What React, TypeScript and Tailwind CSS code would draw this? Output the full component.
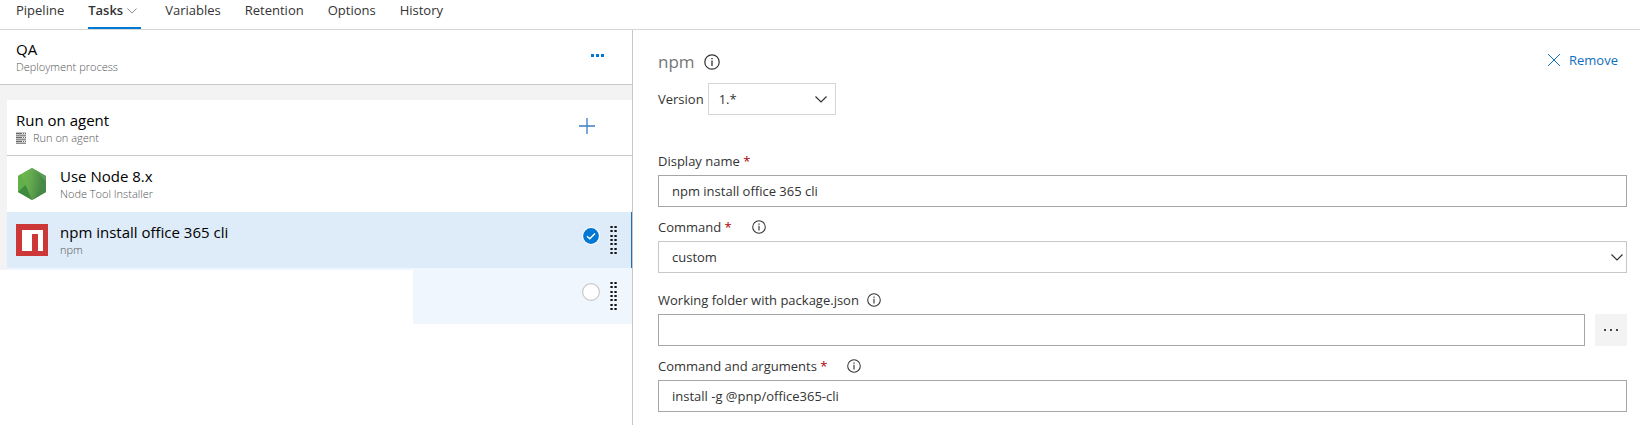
import { useState, type ReactNode } from "react";

const tabs = ["Pipeline", "Tasks", "Variables", "Retention", "Options", "History"];

function Chevron({ className }: { className?: string }) {
  return (
    <svg className={className} viewBox="0 0 12 7" fill="none" stroke="currentColor" strokeWidth="1.2" aria-hidden="true">
      <path d="M0.5 0.5 6 6 11.5 0.5" />
    </svg>
  );
}

function InfoIcon({ className }: { className?: string }) {
  return (
    <svg className={className} viewBox="0 0 16 16" fill="none" stroke="currentColor" aria-hidden="true">
      <circle cx="8" cy="8" r="7.2" strokeWidth="1.2" />
      <path d="M8 6.6V12" strokeWidth="1.3" />
      <path d="M8 3.9V5.3" strokeWidth="1.4" />
    </svg>
  );
}

function NodeIcon() {
  return (
    <svg className="h-8 w-8 shrink-0" viewBox="0 0 32 32" aria-hidden="true">
      <defs>
        <linearGradient id="node-face" x1="0" y1="0.3" x2="1" y2="0.5">
          <stop offset="0" stopColor="#6cbb4b" />
          <stop offset="0.4" stopColor="#64a94f" />
          <stop offset="1" stopColor="#3f8043" />
        </linearGradient>
      </defs>
      <path d="M16 0 30 8V24L16 32 2 24V8Z" fill="#5da352" />
      <path d="M16 0 22 3.500 29 13 19 30.500 16 32 5 6.300Z" fill="url(#node-face)" />
      <path d="M5 6.300 10 18 2 24V8Z" fill="#62b04a" />
      <path d="M2 24 9.500 17 16 32Z" fill="#3f8a3f" />
      <path d="M22 3.500 30 8V13Z" fill="#5f9a62" />
      <path d="M30 12V24L18 31Z" fill="#478748" />
    </svg>
  );
}

function NpmIcon() {
  return (
    <svg className="h-8 w-8 shrink-0" viewBox="0 0 32 32" aria-hidden="true">
      <path d="M0 0H32V32H0Z" fill="#cb3837" />
      <path d="M6 6H27V27H22V10H16V27H6Z" fill="#fff" />
    </svg>
  );
}

function ServerIcon() {
  return (
    <svg className="h-3 w-[10px] shrink-0" viewBox="0 0 10 12" aria-hidden="true">
      <path d="M0 0H10V12H0Z" fill="#c4c4c4" />
      <path d="M0 1.500H10M0 5.500H10M0 9.500H10" stroke="#6b6b6b" />
      <path d="M0 3.500H10M0 7.500H10M0 11.500H10" stroke="#8f8f8f" />
      <path d="M6 1.500H7M8 1.500H9M6 5.500H7M8 5.500H9M6 9.500H7M8 9.500H9" stroke="#eee" />
    </svg>
  );
}

function Grip() {
  return (
    <svg className="h-7 w-[7px]" viewBox="0 0 7 28" aria-hidden="true">
      {[0, 4, 9, 13, 17, 22, 26].map((y) => (
        <path key={y} d={`M0.400 ${y}h2.300v2h-2.300zM4.400 ${y}h2.300v2h-2.300z`} fill="#111" />
      ))}
    </svg>
  );
}

function TitleBlock({ title, children }: { title: string; children: ReactNode }) {
  return (
    <div className="min-w-0 flex-1">
      <div className="text-[15px] leading-5 text-black">{title}</div>
      <div className="flex items-center gap-[7px] text-[11px] leading-4 font-light text-[#555]">{children}</div>
    </div>
  );
}

function Field({ id, label, required, info, children }: { id: string; label: string; required?: boolean; info?: boolean; children: ReactNode }) {
  return (
    <div className="flex flex-col gap-1">
      <div className="flex h-5 items-center">
        <label htmlFor={id}>
          {label}
          {required && <span className="text-[#a80000]"> *</span>}
        </label>
        {info && <InfoIcon className={required ? "ml-5 h-[14px] w-[14px]" : "ml-2 h-[14px] w-[14px]"} />}
      </div>
      {children}
    </div>
  );
}

const inputClass = "h-8 w-full min-w-0 border border-[#a6a6a6] bg-white px-[13px] outline-none";

export default function App() {
  const [name, setName] = useState("npm install office 365 cli");
  const [folder, setFolder] = useState("");
  const [args, setArgs] = useState("install -g @pnp/office365-cli");

  return (
    <div className="flex min-h-screen flex-col bg-white font-['Open_Sans','Noto_Sans',sans-serif] text-[13px] leading-5 text-[#333]">
      <nav className="flex h-[30px] gap-6 border-b border-[#d6d6d6] px-4">
        {tabs.map((tab) =>
          tab === "Tasks" ? (
            <a key={tab} href="#tasks" className="flex items-start gap-1 border-b-2 border-[#0078d4] pr-1 font-semibold">
              {tab}
              <Chevron className="mt-2 h-[6px] w-[10px] text-[#888]" />
            </a>
          ) : (
            <a key={tab} href={`#${tab.toLowerCase()}`}>{tab}</a>
          ),
        )}
      </nav>

      <div className="flex flex-1">
        <aside className="flex w-[633px] shrink-0 flex-col border-r border-[#c8c8c8]">
          <div className="flex h-[55px] items-center border-b border-[#c8c8c8] pr-7 pl-4">
            <TitleBlock title="QA">Deployment process</TitleBlock>
            <button type="button" aria-label="More actions" className="pb-1 text-[#0078d4]">
              <svg className="h-[3px] w-[13px]" viewBox="0 0 13 3" fill="currentColor" aria-hidden="true">
                <path d="M0 0h3v3H0zM5 0h3v3H5zM10 0h3v3h-3z" />
              </svg>
            </button>
          </div>
          <div className="bg-[#f3f3f3] pt-[15px] pl-[7px]">
            <div className="flex h-14 items-center border-b border-[#c8c8c8] bg-white pr-[37px] pl-[9px]">
              <TitleBlock title="Run on agent">
                <ServerIcon />
                Run on agent
              </TitleBlock>
              <button type="button" aria-label="Add a task" className="pb-1 text-[#3b7cc4]">
                <svg className="h-4 w-4" viewBox="0 0 16 16" fill="none" stroke="currentColor" strokeWidth="1.3" aria-hidden="true">
                  <path d="M0 8H16M8 0V16" />
                </svg>
              </button>
            </div>
            <div className="flex h-14 items-center gap-3 bg-white pl-[9px]">
              <NodeIcon />
              <TitleBlock title="Use Node 8.x">Node Tool Installer</TitleBlock>
            </div>
            <div className="flex h-14 items-center gap-3 border-r border-[#1f6fb5] bg-[#deebf8] pr-[14px] pl-[9px]">
              <NpmIcon />
              <TitleBlock title="npm install office 365 cli">npm</TitleBlock>
              <div className="flex items-center gap-[10px]">
                <svg className="-mt-2 h-[18px] w-[18px]" viewBox="0 0 18 18" aria-hidden="true">
                  <circle cx="9" cy="9" r="9" fill="#fff" />
                  <circle cx="9" cy="9" r="7.900" fill="#0078d4" />
                  <path d="M5 9.200 7.800 11.700 13 6.500" fill="none" stroke="#fff" strokeWidth="1.500" />
                </svg>
                <Grip />
              </div>
            </div>
          </div>
          <div className="flex items-start">
            <div className="h-[2px] flex-1 border-l-[7px] border-[#f3f3f3] bg-[#eff6fd]" />
            <div className="flex h-14 w-[219px] items-center justify-end gap-[10px] bg-[#eff6fd] pr-[15px]">
              <svg className="-mt-2 h-[18px] w-[18px]" viewBox="0 0 18 18" aria-hidden="true">
                <circle cx="9" cy="9" r="8.400" fill="#fff" stroke="#c8c8c8" strokeWidth="1.200" />
              </svg>
              <Grip />
            </div>
          </div>
        </aside>

        <main className="min-w-0 flex-1 pt-5 pr-[13px] pl-[25px]">
          <div className="flex items-start justify-between">
            <h1 className="flex items-center gap-[9px] text-[17px] leading-6 text-[#767676]">
              npm
              <InfoIcon className="h-4 w-4 text-[#333]" />
            </h1>
            <button type="button" className="flex items-center gap-[9px] pr-[9px] text-[#106ebe]">
              <svg className="h-3 w-3" viewBox="0 0 12 12" fill="none" stroke="currentColor" aria-hidden="true">
                <path d="M0 0 12 12M12 0 0 12" />
              </svg>
              Remove
            </button>
          </div>
          <div className="mt-[9px] flex items-center gap-1">
            <label htmlFor="version">Version</label>
            <div className="relative">
              <select id="version" className="h-8 w-32 appearance-none border border-[#d6d6d6] bg-white px-[10px]">
                <option>1.*</option>
              </select>
              <Chevron className="pointer-events-none absolute top-[13px] right-[9px] h-[7px] w-3" />
            </div>
          </div>

          <div className="mt-9 flex flex-col gap-[10px]">
            <Field id="display-name" label="Display name" required>
              <input id="display-name" className={inputClass} value={name} onChange={(e) => setName(e.target.value)} />
            </Field>
            <Field id="command" label="Command" required info>
              <div className="relative">
                <select id="command" className="h-8 w-full appearance-none border border-[#c8c8c8] bg-white px-[13px]">
                  <option>custom</option>
                </select>
                <Chevron className="pointer-events-none absolute top-[13px] right-1 h-[7px] w-3" />
              </div>
            </Field>
            <div className="pt-[7px]">
              <Field id="folder" label="Working folder with package.json" info>
                <div className="flex gap-[10px]">
                  <input id="folder" className={inputClass} value={folder} onChange={(e) => setFolder(e.target.value)} />
                  <button type="button" aria-label="Browse" className="flex h-8 w-8 shrink-0 items-center justify-center bg-[#f3f3f3]">
                    <svg className="h-[2px] w-[14px]" viewBox="0 0 14 2" fill="#444" aria-hidden="true">
                      <path d="M0 0h2v2H0zM6 0h2v2H6zM12 0h2v2h-2z" />
                    </svg>
                  </button>
                </div>
              </Field>
            </div>
            <Field id="arguments" label="Command and arguments" required info>
              <input id="arguments" className={inputClass} value={args} onChange={(e) => setArgs(e.target.value)} />
            </Field>
          </div>
        </main>
      </div>
    </div>
  );
}
